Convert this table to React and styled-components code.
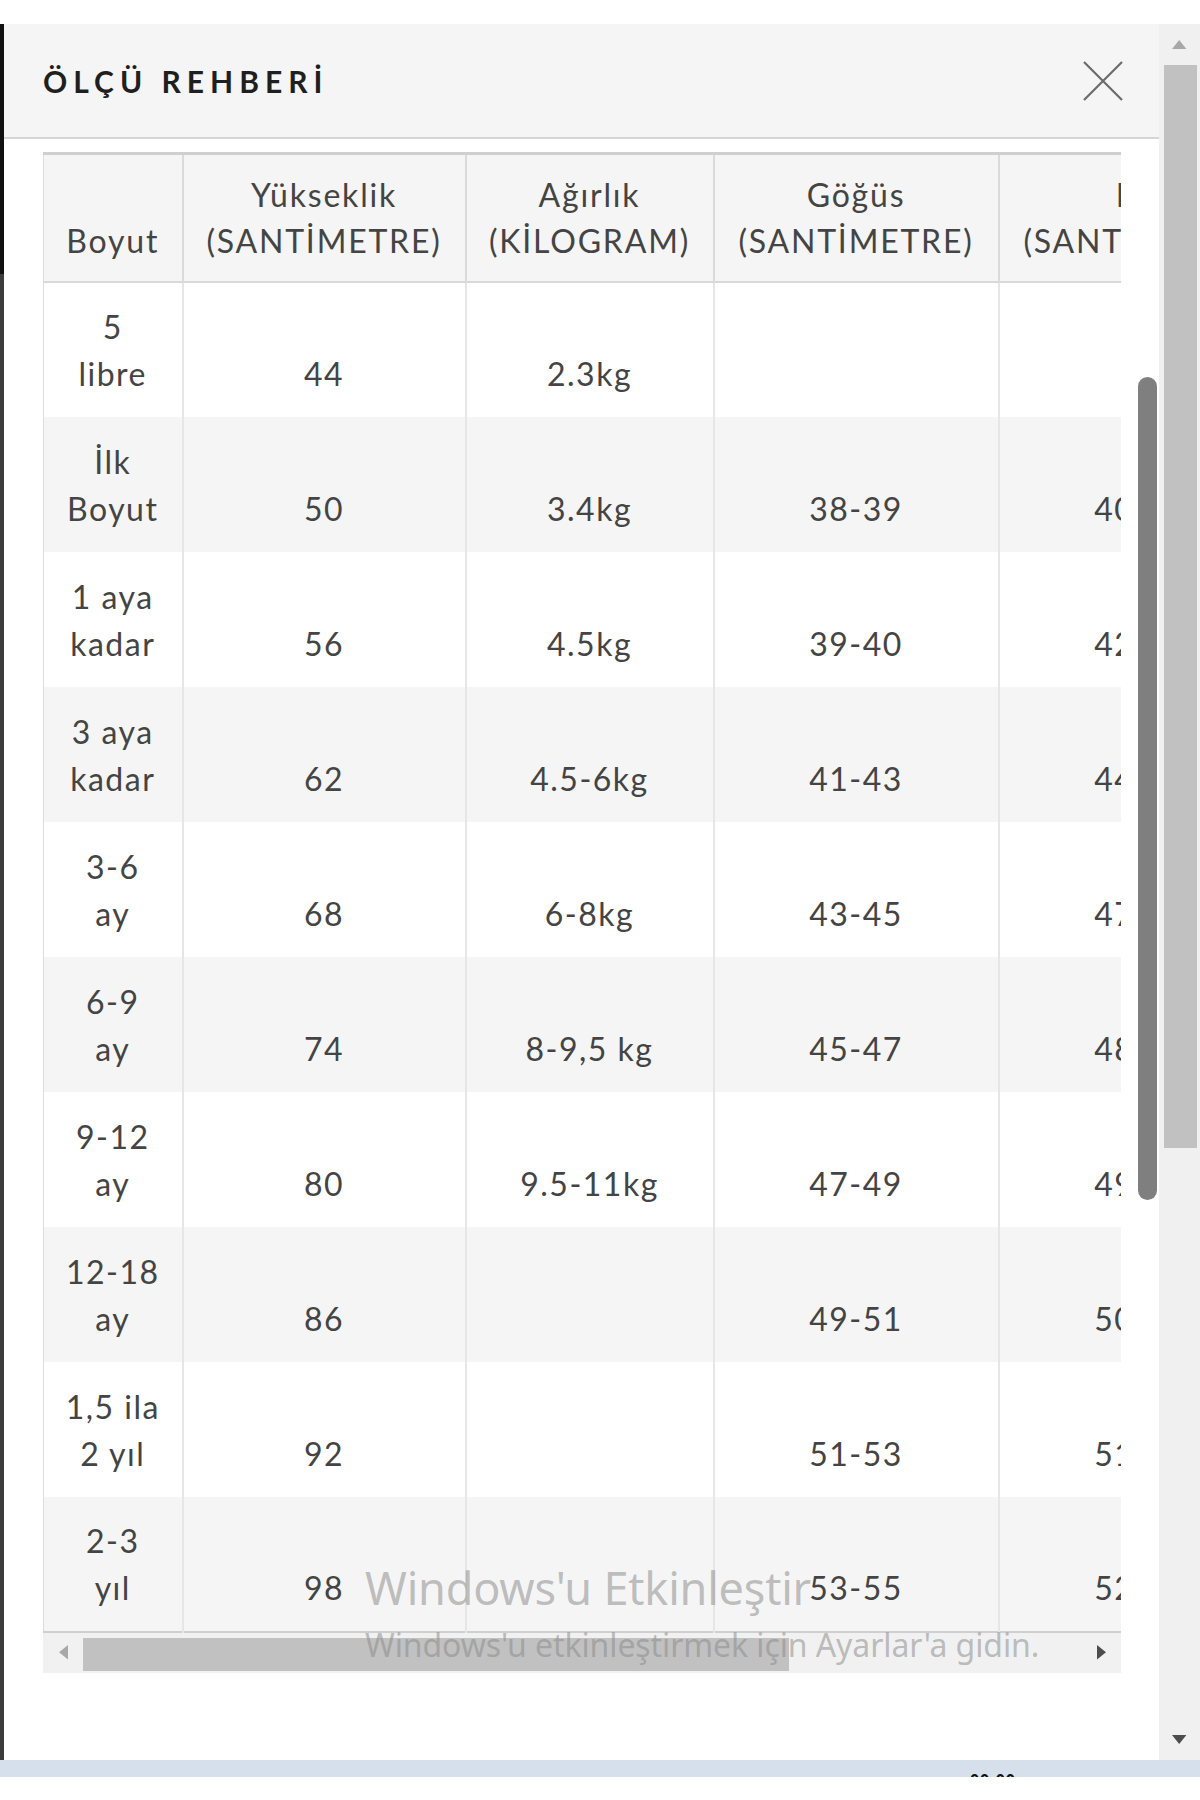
import styled, { createGlobalStyle } from 'styled-components';

const GlobalStyle = createGlobalStyle`
  html, body {
    margin: 0;
    padding: 0;
    background: #fff;
  }
  body {
    font-family: Lato, "Noto Sans", sans-serif;
  }
`

const Page = styled.div`
  position: relative;
  width: 1200px;
  height: 1800px;
  display: flex;
  flex-direction: column;
  background: #fff;
  overflow: hidden;
`

const TopGap = styled.div`
  height: 24px;
  flex: none;
`

const Main = styled.div`
  display: flex;
  height: 1736px;
  flex: none;
`

const EdgeStrip = styled.div`
  width: 4px;
  flex: none;
  background: linear-gradient(#111 0 250px, #3c3c3c 250px);
`

const Modal = styled.section`
  position: relative;
  flex: 1;
  min-width: 0;
  display: flex;
  flex-direction: column;
  background: #fff;
`

const Header = styled.header`
  height: 113px;
  flex: none;
  display: flex;
  align-items: center;
  justify-content: space-between;
  padding: 0 36px 0 39px;
  background: #f5f5f5;
  border-bottom: 2px solid #d6d6d6;
`

const Title = styled.h2`
  margin: 0;
  font-family: Lato, sans-serif;
  font-size: 30px;
  font-weight: 700;
  letter-spacing: 6px;
  color: #1f1f1f;
`

const CloseButton = styled.button`
  width: 40px;
  height: 40px;
  padding: 0;
  border: 0;
  background: none;
  display: flex;
`

const Body = styled.div`
  flex: 1;
  padding: 13px 38px 0 39px;
`

const TableScroller = styled.div`
  width: 1078px;
  overflow: hidden;
`

const Table = styled.table`
  border-collapse: collapse;
  table-layout: fixed;
  width: 1240px;
  font-family: Lato, sans-serif;
  color: #444;
  border-top: 3px solid #cfcfcf;
  border-left: 1px solid #dcdcdc;
  border-bottom: 2px solid #cfcfcf;
`

const HeadRow = styled.tr`
  height: 128px;
  background: #f5f5f5;
  border-bottom: 2px solid #d9d9d9;
`

const HeadCell = styled.th`
  font-weight: 400;
  font-size: 32px;
  line-height: 46px;
  letter-spacing: 1.8px;
  text-align: center;
  vertical-align: bottom;
  padding: 0 8px 17px;
  white-space: nowrap;
  border-right: 2px solid #dadada;
`

const Row = styled.tr`
  height: 135px;
  background: ${p => (p.$striped ? '#f5f5f5' : '#fff')};
`

const Cell = styled.td`
  font-size: 32px;
  line-height: 47px;
  letter-spacing: 1.5px;
  text-align: center;
  vertical-align: bottom;
  padding: 0 8px 20px;
  white-space: nowrap;
  border-right: 2px solid #e6e6e6;
`

const HScrollbar = styled.div`
  display: flex;
  align-items: center;
  height: 40px;
  width: 1078px;
  background: #f1f1f1;
`

const HArrow = styled.div`
  width: 40px;
  height: 40px;
  flex: none;
  display: flex;
  align-items: center;
  justify-content: center;
`

const HThumb = styled.div`
  width: 706px;
  height: 33px;
  margin-top: 3px;
  background: #c1c1c1;
`

const Spacer = styled.div`
  flex: 1;
`

const OverlayThumb = styled.div`
  position: absolute;
  right: 2px;
  top: 353px;
  width: 19px;
  height: 823px;
  border-radius: 10px;
  background: #7f7f7f;
`

const PageScrollbar = styled.div`
  width: 41px;
  flex: none;
  display: flex;
  flex-direction: column;
  align-items: center;
  background: #f0f0f0;
`

const VArrow = styled.div`
  height: 41px;
  width: 100%;
  flex: none;
  display: flex;
  align-items: center;
  justify-content: center;
`

const VThumb = styled.div`
  width: 33px;
  height: 1083px;
  margin-left: 2px;
  background: #c1c1c1;
`

const Taskbar = styled.div`
  height: 17px;
  flex: none;
  background: #d6e0ec;
  overflow: hidden;
  display: flex;
  justify-content: flex-end;
  padding-right: 184px;
`

const Clock = styled.span`
  padding-top: 9px;
  font-family: "Noto Sans", sans-serif;
  font-size: 16px;
  font-weight: 700;
  letter-spacing: 1px;
  color: #111;
`

const Watermark = styled.div`
  position: absolute;
  left: 365px;
  top: 1559px;
  pointer-events: none;
  font-family: "Noto Sans", sans-serif;
  color: rgba(140, 140, 140, 0.55);
`

const WatermarkTitle = styled.div`
  font-size: 45px;
  line-height: 58px;
  letter-spacing: -0.2px;
`

const WatermarkText = styled.div`
  font-size: 32px;
  line-height: 56px;
  letter-spacing: -0.1px;
`

const columns = [139, 283, 248, 285, 285]

const headers = [
  ['Boyut'],
  ['Yükseklik', '(SANTİMETRE)'],
  ['Ağırlık', '(KİLOGRAM)'],
  ['Göğüs', '(SANTİMETRE)'],
  ['Bel', '(SANTİMETRE)'],
]

const rows = [
  [['5', 'libre'], '44', '2.3kg', '', ''],
  [['İlk', 'Boyut'], '50', '3.4kg', '38-39', '40-42'],
  [['1 aya', 'kadar'], '56', '4.5kg', '39-40', '42-44'],
  [['3 aya', 'kadar'], '62', '4.5-6kg', '41-43', '44-46'],
  [['3-6', 'ay'], '68', '6-8kg', '43-45', '47-48'],
  [['6-9', 'ay'], '74', '8-9,5 kg', '45-47', '48-49'],
  [['9-12', 'ay'], '80', '9.5-11kg', '47-49', '49-50'],
  [['12-18', 'ay'], '86', '', '49-51', '50-51'],
  [['1,5 ila', '2 yıl'], '92', '', '51-53', '51-52'],
  [['2-3', 'yıl'], '98', '', '53-55', '52-53'],
]

function Lines({ lines }) {
  return lines.map((line, i) => (
    <span key={i}>
      {i > 0 && <br />}
      {line}
    </span>
  ))
}

function Triangle({ dir, color, size = 10 }) {
  const pts = {
    left: `${size},0 ${size},${size * 1.6} 0,${size * 0.8}`,
    right: `0,0 0,${size * 1.6} ${size},${size * 0.8}`,
    up: `0,${size} ${size * 1.6},${size} ${size * 0.8},0`,
    down: `0,0 ${size * 1.6},0 ${size * 0.8},${size}`,
  }[dir]
  const horizontal = dir === 'left' || dir === 'right'
  return (
    <svg width={horizontal ? size : size * 1.6} height={horizontal ? size * 1.6 : size}>
      <polygon points={pts} fill={color} />
    </svg>
  )
}

export default function App() {
  return (
    <Page>
      <GlobalStyle />
      <TopGap />
      <Main>
        <EdgeStrip />
        <Modal>
          <Header>
            <Title>ÖLÇÜ REHBERİ</Title>
            <CloseButton aria-label="Kapat">
              <svg width="40" height="40" viewBox="0 0 40 40">
                <path d="M1 1 L39 39 M39 1 L1 39" stroke="#6b6b6b" strokeWidth="2.2" fill="none" />
              </svg>
            </CloseButton>
          </Header>

          <Body>
            <TableScroller>
              <Table>
                <colgroup>
                  {columns.map((w, i) => <col key={i} style={{ width: w }} />)}
                </colgroup>
                <thead>
                  <HeadRow>
                    {headers.map((h, i) => (
                      <HeadCell key={i}><Lines lines={h} /></HeadCell>
                    ))}
                  </HeadRow>
                </thead>
                <tbody>
                  {rows.map((r, i) => (
                    <Row key={i} $striped={i % 2 === 1}>
                      <Cell><Lines lines={r[0]} /></Cell>
                      {r.slice(1).map((v, j) => <Cell key={j}>{v}</Cell>)}
                    </Row>
                  ))}
                </tbody>
              </Table>
            </TableScroller>
            <HScrollbar>
              <HArrow><Triangle dir="left" color="#a8a8a8" size={9} /></HArrow>
              <HThumb />
              <Spacer />
              <HArrow><Triangle dir="right" color="#4d4d4d" size={9} /></HArrow>
            </HScrollbar>
          </Body>

          <OverlayThumb />
        </Modal>

        <PageScrollbar>
          <VArrow><Triangle dir="up" color="#a8a8a8" size={9} /></VArrow>
          <VThumb />
          <Spacer />
          <VArrow><Triangle dir="down" color="#4d4d4d" size={9} /></VArrow>
        </PageScrollbar>
      </Main>

      <Taskbar>
        <Clock>00:00</Clock>
      </Taskbar>

      <Watermark>
        <WatermarkTitle>Windows'u Etkinleştir</WatermarkTitle>
        <WatermarkText>Windows'u etkinleştirmek için Ayarlar'a gidin.</WatermarkText>
      </Watermark>
    </Page>
  )
}
